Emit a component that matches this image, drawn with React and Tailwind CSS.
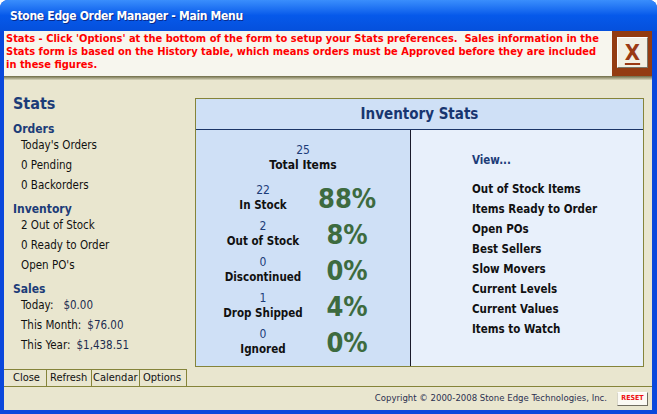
import React from "react";

const FONT = "font-[family-name:'DejaVu_Sans_Condensed','DejaVu_Sans',sans-serif]";

const orders = ["Today's Orders", "0 Pending", "0 Backorders"];
const inventory = ["2 Out of Stock", "0 Ready to Order", "Open PO's"];
const sales = [
  ["Today:", "$0.00", "ml-[10px]"],
  ["This Month:", "$76.00", "ml-[6px]"],
  ["This Year:", "$1,438.51", "ml-[6px]"],
];

const rows = [
  ["22", "In Stock", "88%"],
  ["2", "Out of Stock", "8%"],
  ["0", "Discontinued", "0%"],
  ["1", "Drop Shipped", "4%"],
  ["0", "Ignored", "0%"],
];

const views = [
  "Out of Stock Items",
  "Items Ready to Order",
  "Open POs",
  "Best Sellers",
  "Slow Movers",
  "Current Levels",
  "Current Values",
  "Items to Watch",
];

const tabs = [
  ["Close", "w-[43px] pl-[9px]"],
  ["Refresh", "w-[45px] pl-[3px]"],
  ["Calendar", "w-[48px] pl-[1px]"],
  ["Options", "w-[47px] pl-[3px]"],
];

const Section = ({ title, items, first }) => (
  <div className={first ? "mt-[5px]" : "mt-[4px]"}>
    <div className="pl-[9px] leading-[20px] text-[12px] font-bold text-[#1c3c78]">{title}</div>
    {items.map((it, i) => (
      <div key={i} className={`pl-[17px] leading-[20px] text-[11.5px] text-[#111] ${i === 0 ? "-mt-[4px]" : ""}`}>
        {it}
      </div>
    ))}
  </div>
);

export default function App() {
  return (
    <div className={`w-[657px] h-[414px] bg-white ${FONT}`}>
      <div className="w-full h-full rounded-t-[8px] bg-[#0a48dc] flex flex-col overflow-hidden">
        {/* title bar */}
        <div className="h-[31px] shrink-0 bg-gradient-to-b from-[#3a8efc] via-[#0659ea] to-[#0550dc] flex items-center pl-[10px]">
          <span className="text-white text-[12px] font-bold tracking-[-0.3px] [text-shadow:1px_1px_0_#0a2a8a]">
            Stone Edge Order Manager - Main Menu
          </span>
        </div>

        <div className="flex-1 flex flex-col ml-[4px] mr-[5px] mb-[4px] bg-[#e9e6cf]">
          {/* message band */}
          <div className="h-[45px] shrink-0 flex">
            <div className="flex-1 bg-[#f7f6ee] pt-[1px] pl-[2px] text-[11px] leading-[13px] font-bold text-[#ff0000]">
              Stats - Click 'Options' at the bottom of the form to setup your Stats preferences.&nbsp; Sales information in the
              <br />
              Stats form is based on the History table, which means orders must be Approved before they are included
              <br />
              in these figures.
            </div>
            <div className="w-[40px] bg-[#933c12] pl-[5px] pt-[6px]">
              <div className="w-[31px] h-[31px] bg-[#f2f0e4] border border-t-white border-l-white border-r-[#7a786a] border-b-[#7a786a] flex items-center justify-center">
                <span className="text-[22px] leading-none font-bold text-[#9a3a14] underline underline-offset-[3px] decoration-[2px]">X</span>
              </div>
            </div>
          </div>
          <div className="h-[4px] shrink-0 bg-gradient-to-b from-[#6e6b45] to-[#d9d6bd]" />

          {/* main area */}
          <div className="h-[289px] shrink-0 flex">
            <div className="w-[191px] shrink-0 pt-[14px]">
              <div className="pl-[9px] leading-[20px] text-[16px] font-bold text-[#1c3c78]">Stats</div>
              <Section title="Orders" items={orders} first />
              <Section title="Inventory" items={inventory} />
              <div className="mt-[4px]">
                <div className="pl-[9px] leading-[20px] text-[12px] font-bold text-[#1c3c78]">Sales</div>
                {sales.map(([l, v, m], i) => (
                  <div key={i} className={`pl-[17px] leading-[20px] text-[11.5px] text-[#111] ${i === 0 ? "-mt-[4px]" : ""}`}>
                    {l}
                    <span className={`${m} text-[#1c2c50]`}>{v}</span>
                  </div>
                ))}
              </div>
            </div>

            <div className="w-[449px] shrink-0 mt-[18px] h-[269px] border border-[#85843a] flex flex-col">
              <div className="h-[31px] shrink-0 bg-[#cfe0f6] border-b border-[#1b3567] flex items-center justify-center">
                <span className="text-[15px] font-bold text-[#183670] pt-[1px]">Inventory Stats</span>
              </div>
              <div className="flex-1 flex">
                <div className="w-[215px] shrink-0 bg-[#cfe0f6] border-r border-[#1a1a2a] pt-[13px]">
                  <div className="text-center">
                    <div className="leading-[14px] text-[12px] text-[#1c3c78]">25</div>
                    <div className="leading-[16px] text-[12px] font-bold text-[#111]">Total Items</div>
                  </div>
                  <div className="mt-[10px] flex flex-col gap-[6px]">
                    {rows.map(([n, l, p], i) => (
                      <div key={i} className="flex items-center h-[30px]">
                        <div className="ml-[12px] w-[110px] text-center">
                          <div className="leading-[14px] text-[12px] text-[#1c3c78]">{n}</div>
                          <div className="leading-[16px] text-[11.5px] font-bold text-[#111]">{l}</div>
                        </div>
                        <div className="w-[58px] text-center whitespace-nowrap text-[27px] leading-none font-bold text-[#3d6b3f] pt-[1px]">
                          {p}
                        </div>
                      </div>
                    ))}
                  </div>
                </div>
                <div className="flex-1 bg-[#e8f0fb] pl-[61px] pt-[22px]">
                  <div className="leading-[16px] text-[11.5px] font-bold text-[#1c3c78]">View...</div>
                  <div className="mt-[11px]">
                    {views.map((v) => (
                      <div key={v} className="leading-[20px] text-[11.5px] font-bold text-[#111]">{v}</div>
                    ))}
                  </div>
                </div>
              </div>
            </div>
          </div>

          {/* tabs */}
          <div className="h-[18px] shrink-0 flex border-b border-[#85843a]">
            {tabs.map(([t, w]) => (
              <div
                key={t}
                className={`h-full border-t border-r border-[#85843a] text-[11px] leading-[16px] text-[#111] whitespace-nowrap ${w}`}
              >
                {t}
              </div>
            ))}
          </div>

          {/* status bar */}
          <div className="flex-1 flex items-center justify-end pr-[4px]">
            <span className="text-[9.5px] text-[#2b3050] mr-[10px]">Copyright © 2000-2008 Stone Edge Technologies, Inc.</span>
            <div className="w-[31px] h-[14px] bg-[#fbfaf4] border border-t-white border-l-[#d8d6c8] border-r-[#6e6c60] border-b-[#6e6c60] flex items-center justify-center">
              <span className="text-[7px] font-bold text-[#ee1010] leading-none">RESET</span>
            </div>
          </div>
        </div>
      </div>
    </div>
  );
}
